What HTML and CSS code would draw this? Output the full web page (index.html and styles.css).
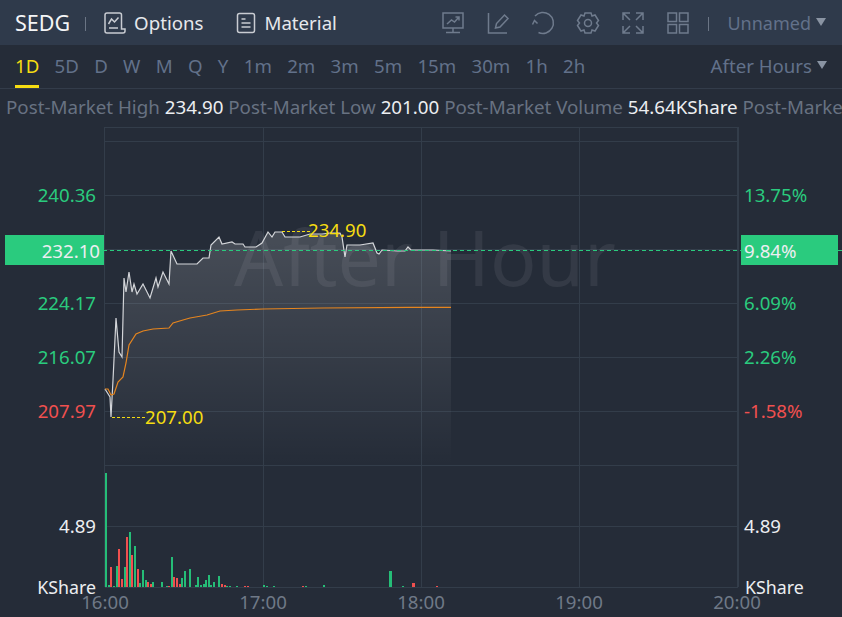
FILE: index.html
```html
<!DOCTYPE html>
<html lang="en">
<head>
    <meta charset="UTF-8">
    <title>SEDG Chart</title>
    <link rel="stylesheet" href="styles.css">
</head>
<body>

    <!-- Top toolbar -->
    <header class="toolbar">
        <span class="symbol">SEDG</span>
        <span class="sep"></span>
        <span class="tool">
            <svg class="icon" width="22" height="22" viewBox="0 0 22 22">
                <path d="M17.500 17V3a2 2 0 0 0-2-2H3a2 2 0 0 0-2 2v16a2 2 0 0 0 2 2h16a2 2 0 0 0 2-2v-2z"/>
                <path d="M4.500 12l3-5 3 3 4-4.500M5 16h9"/>
            </svg>
            Options
        </span>
        <span class="tool tool-second">
            <svg class="icon" width="20" height="22" viewBox="0 0 20 22">
                <rect x="1.500" y="1.500" width="17" height="19" rx="2"/>
                <path d="M5.500 7h4M5.500 11h9M5.500 15h9"/>
            </svg>
            Material
        </span>
        <div class="toolbar-right">
            <svg class="icon" width="24" height="24" viewBox="0 0 24 24">
                <rect x="2" y="2" width="20" height="15"/>
                <path d="M12 17v4.500M5 21.500h14M6 13l4.500-4 3 2 4.500-5M14.500 6H18v3.500"/>
            </svg>
            <svg class="icon" width="24" height="24" viewBox="0 0 24 24">
                <path d="M2.500 2v20H21M9.500 17l1-4.500 8-8.500 3.500 3.500-8 8.500z"/>
            </svg>
            <svg class="icon" width="24" height="24" viewBox="0 0 24 24">
                <path d="M7.500 21.500A10.500 10.500 0 1 0 4 5M1.500 13.500L3.500 9.500 6.500 12.500"/>
            </svg>
            <svg class="icon" width="24" height="24" viewBox="0 0 24 24">
                <path d="M9 2h6l1 3 3-1 3.500 5.500L20.500 12l2 2.500L19 20l-3-1-1 3H9l-1-3-3 1-3.500-5.500 2-2.500-2-2.500L5 4l3 1z"/>
                <circle cx="12" cy="12" r="3.500"/>
            </svg>
            <svg class="icon" width="24" height="24" viewBox="0 0 24 24">
                <path d="M2 9V2h7M2 2l7 7M22 9V2h-7M22 2l-7 7M2 15v7h7M2 22l7-7M22 15v7h-7M22 22l-7-7"/>
            </svg>
            <svg class="icon" width="24" height="24" viewBox="0 0 24 24">
                <rect x="2" y="2" width="8.500" height="8.500"/>
                <rect x="13.500" y="2" width="8.500" height="8.500"/>
                <rect x="2" y="13.500" width="8.500" height="8.500"/>
                <rect x="13.500" y="13.500" width="8.500" height="8.500"/>
            </svg>
            <span class="sep"></span>
            <span class="dropdown">Unnamed<i class="caret"></i></span>
        </div>
    </header>

    <!-- Interval tabs -->
    <nav class="tabs">
        <a class="tab active">1D</a>
        <a class="tab">5D</a>
        <a class="tab">D</a>
        <a class="tab">W</a>
        <a class="tab">M</a>
        <a class="tab">Q</a>
        <a class="tab">Y</a>
        <a class="tab">1m</a>
        <a class="tab">2m</a>
        <a class="tab">3m</a>
        <a class="tab">5m</a>
        <a class="tab">15m</a>
        <a class="tab">30m</a>
        <a class="tab">1h</a>
        <a class="tab">2h</a>
        <span class="dropdown tabs-right">After Hours<i class="caret"></i></span>
    </nav>

    <!-- Post market stats -->
    <div class="stats">
        Post-Market High <b>234.90</b> Post-Market Low <b>201.00</b> Post-Market Volume <b>54.64KShare</b> Post-Market Amount
    </div>

    <!-- Chart canvas, coordinates are page pixels -->
    <svg class="chart" width="842" height="490" viewBox="0 127 842 490">
        <defs>
            <linearGradient id="area" x1="0" y1="230" x2="0" y2="465" gradientUnits="userSpaceOnUse">
                <stop offset="0" stop-color="#fff" stop-opacity="0.16"/>
                <stop offset="1" stop-color="#fff" stop-opacity="0"/>
            </linearGradient>
        </defs>

        <path class="grid" d="M104.500 127V587M263.500 127V587M421.500 127V587M579.500 127V587"/>
        <path class="grid grid-edge" d="M738 127V587"/>
        <path class="grid" d="M105 127.500H738M105 141.500H738M105 195.500H738M105 249.500H738M105 303.500H738M105 357.500H738M105 411.500H738M105 465.500H738M105 526.500H738M105 587.500H738"/>

        <text class="watermark" x="425" y="286" text-anchor="middle">After Hour</text>

        <!-- price area and lines -->
        <path fill="url(#area)" d="M110 397L111 417L113 380L116 318L119 352L122 357L124 278L126 292L129 272L132 292L134 284L137 294L143 284L150 298L156 278L158 287L163 272L169 284L171 251L177 264L197 264L203 258L209 258L211 245L219 237L222 244L232 242L235 244L243 244L245 247L256 247L262 243L268 232L272 237L275 232L282 232L285 237L300 237L310 234L322 234L330 233L340 233L342 237L345 257L347 245L360 245L373 243L377 253L379 254L382 250L397 251L405 251L408 247L411 250L433 250L451 251V465H110Z"/>
        <path class="price" d="M105 389L110 397L111 417L113 380L116 318L119 352L122 357L124 278L126 292L129 272L132 292L134 284L137 294L143 284L150 298L156 278L158 287L163 272L169 284L171 251L177 264L197 264L203 258L209 258L211 245L219 237L222 244L232 242L235 244L243 244L245 247L256 247L262 243L268 232L272 237L275 232L282 232L285 237L300 237L310 234L322 234L330 233L340 233L342 237L345 257L347 245L360 245L373 243L377 253L379 254L382 250L397 251L405 251L408 247L411 250L433 250L451 251"/>
        <path class="avg" d="M105 389L108 389L111 395L114 394L118 382L123 377L126 363L129 345L136 334L143 331L153 329L169 328L173 323L183 320L190 318L207 315L220 311L237 310L263 309L322 308L410 307.300L451 307.300"/>

        <path class="last" d="M5 250.500H842"/>
        <path class="marker" d="M112 417.500H146M282 231.500H310"/>
        <text class="hl" x="145" y="424">207.00</text>
        <text class="hl" x="308" y="237">234.90</text>

        <!-- volume bars -->
        <g class="up">
            <rect x="105" y="473" width="2" height="114"/><rect x="108" y="585" width="2" height="2"/><rect x="113" y="586" width="2" height="1"/>
            <rect x="116" y="566" width="2" height="21"/><rect x="124" y="567" width="2" height="20"/><rect x="129" y="532" width="2" height="55"/>
            <rect x="134" y="546" width="2" height="41"/><rect x="139" y="583" width="2" height="4"/><rect x="142" y="570" width="2" height="17"/>
            <rect x="145" y="580" width="2" height="7"/><rect x="152" y="582" width="2" height="5"/><rect x="161" y="582" width="2" height="5"/>
            <rect x="166" y="586" width="2" height="1"/><rect x="171" y="557" width="2" height="30"/><rect x="181" y="578" width="2" height="9"/>
            <rect x="184" y="571" width="2" height="16"/><rect x="189" y="569" width="2" height="18"/><rect x="195" y="585" width="2" height="2"/>
            <rect x="197" y="577" width="2" height="10"/><rect x="200" y="585" width="2" height="2"/><rect x="203" y="584" width="2" height="3"/>
            <rect x="205" y="580" width="2" height="7"/><rect x="208" y="575" width="2" height="12"/><rect x="210" y="585" width="2" height="2"/>
            <rect x="213" y="582" width="2" height="5"/><rect x="218" y="576" width="2" height="11"/><rect x="226" y="586" width="2" height="1"/>
            <rect x="229" y="586" width="2" height="1"/><rect x="236" y="586" width="2" height="1"/><rect x="263" y="585" width="2" height="2"/>
            <rect x="266" y="586" width="2" height="1"/><rect x="273" y="586" width="2" height="1"/><rect x="305" y="586" width="2" height="1"/>
            <rect x="323" y="585" width="2" height="2"/><rect x="389" y="571" width="3" height="16"/><rect x="402" y="586" width="2" height="1"/>
        </g>
        <g class="down">
            <rect x="110" y="567" width="2" height="20"/><rect x="118" y="549" width="2" height="38"/><rect x="121" y="579" width="2" height="8"/>
            <rect x="126" y="537" width="2" height="50"/><rect x="131" y="555" width="2" height="32"/><rect x="137" y="569" width="2" height="18"/>
            <rect x="147" y="582" width="2" height="5"/><rect x="150" y="584" width="2" height="3"/><rect x="168" y="586" width="2" height="1"/>
            <rect x="173" y="577" width="2" height="10"/><rect x="176" y="578" width="2" height="9"/><rect x="179" y="584" width="2" height="3"/>
            <rect x="221" y="584" width="2" height="3"/><rect x="224" y="585" width="2" height="2"/><rect x="244" y="586" width="2" height="1"/>
            <rect x="247" y="586" width="2" height="1"/><rect x="302" y="586" width="2" height="1"/><rect x="412" y="583" width="3" height="4"/>
            <rect x="436" y="586" width="2" height="1"/>
        </g>

        <!-- left axis -->
        <rect class="last-box" x="5" y="235" width="99" height="30"/>
        <rect class="last-box" x="741" y="235" width="97" height="30"/>
        <g class="label-end">
            <text class="rise" x="96" y="202">240.36</text>
            <text class="plain" x="100" y="258">232.10</text>
            <text class="rise" x="96" y="310">224.17</text>
            <text class="rise" x="96" y="364">216.07</text>
            <text class="fall" x="96" y="418">207.97</text>
            <text class="plain" x="96" y="533">4.89</text>
            <text class="plain unit" x="96" y="594">KShare</text>
        </g>
        <!-- right axis -->
        <text class="rise" x="744" y="202">13.75%</text>
        <text class="plain" x="744" y="258">9.84%</text>
        <text class="rise" x="744" y="310">6.09%</text>
        <text class="rise" x="744" y="364">2.26%</text>
        <text class="fall" x="744" y="418">-1.58%</text>
        <text class="plain" x="744" y="533">4.89</text>
        <text class="plain unit" x="745" y="594">KShare</text>
        <!-- time axis -->
        <g class="label-mid">
            <text x="105" y="609">16:00</text>
            <text x="263" y="609">17:00</text>
            <text x="421" y="609">18:00</text>
            <text x="579" y="609">19:00</text>
            <text x="737" y="609">20:00</text>
        </g>
    </svg>

</body>
</html>
```

FILE: styles.css
```css
/* General styling */
html, body {
    margin: 0;
    height: 617px;
    overflow: hidden;
    background-color: #252c38;
}

body {
    font-family: "Noto Sans", "Open Sans", sans-serif;
    font-size: 18.67px;
}

/* Toolbar */
.toolbar {
    display: flex;
    align-items: center;
    height: 45px;
    padding: 0 16px 0 15px;
    background-color: #2f3a4b;
    color: #e6e8ec;
}

.symbol {
    color: #f4f5f7;
    font-size: 21.5px;
}

.sep {
    width: 1px;
    height: 14px;
    margin: 2px 0 0 15px;
    background-color: #6b7585;
}

.tool {
    display: flex;
    align-items: center;
    gap: 8px;
    margin-left: 18px;
}

.tool-second {
    margin-left: 33px;
}

.tool .icon {
    stroke: #c9ccd2;
}

.icon {
    fill: none;
    stroke: #6f7b8d;
    stroke-width: 1.5;
}

.toolbar-right {
    display: flex;
    align-items: center;
    gap: 21px;
    margin-left: auto;
}

.toolbar-right .sep {
    margin: 2px 0 0 -3px;
}

.dropdown {
    display: flex;
    align-items: center;
    color: #62718a;
}

.toolbar-right .dropdown {
    margin-left: -3px;
    font-size: 18px;
}

.caret {
    width: 0;
    height: 0;
    margin: -2px 0 0 5px;
    border-left: 5.500px solid transparent;
    border-right: 5.500px solid transparent;
    border-top: 8px solid #8a94a3;
}

/* Interval tabs */
.tabs {
    display: flex;
    align-items: center;
    gap: 15.300px;
    height: 43px;
    padding: 0 15px;
    border-bottom: 1px solid #333c4a;
    color: #62718a;
}

.tab {
    position: relative;
    line-height: 41px;
    padding-bottom: 2px;
}

.tab.active {
    color: #f5dc12;
}

.tab.active::after {
    content: "";
    position: absolute;
    left: 0;
    right: 0;
    bottom: 0;
    height: 3px;
    background-color: #f5dc12;
}

.tabs-right {
    margin-left: auto;
    padding-bottom: 2px;
}

/* Stats line */
.stats {
    height: 38px;
    padding-left: 6px;
    font-size: 18.75px;
    line-height: 36px;
    white-space: nowrap;
    overflow: hidden;
    color: #687282;
}

.stats b {
    font-weight: normal;
    color: #eceef1;
}

/* Chart */
.chart {
    display: block;
    font-family: "Noto Sans", "Open Sans", sans-serif;
    font-size: 18.67px;
}

.grid {
    fill: none;
    stroke: #333d4a;
    stroke-width: 1;
}

.grid-edge {
    stroke-width: 2;
}

.watermark {
    font-size: 77px;
    fill: #fff;
    fill-opacity: 0.07;
}

.price {
    fill: none;
    stroke: #d3d5d9;
    stroke-width: 1.2;
}

.avg {
    fill: none;
    stroke: #e5851f;
    stroke-width: 1.2;
}

.last {
    fill: none;
    stroke: #2acb7e;
    stroke-dasharray: 4 3;
}

.marker {
    fill: none;
    stroke: #f5dc12;
    stroke-dasharray: 3 2;
}

.hl {
    fill: #f5dc12;
}

.up {
    fill: #25bd77;
}

.down {
    fill: #f0504f;
}

.last-box {
    fill: #2acb7e;
}

.rise {
    fill: #2acb7e;
}

.fall {
    fill: #f0504f;
}

.plain {
    fill: #eceef1;
}

.unit {
    font-size: 17.8px;
}

.label-end {
    text-anchor: end;
}

.label-mid {
    text-anchor: middle;
    fill: #6f7987;
}
```
